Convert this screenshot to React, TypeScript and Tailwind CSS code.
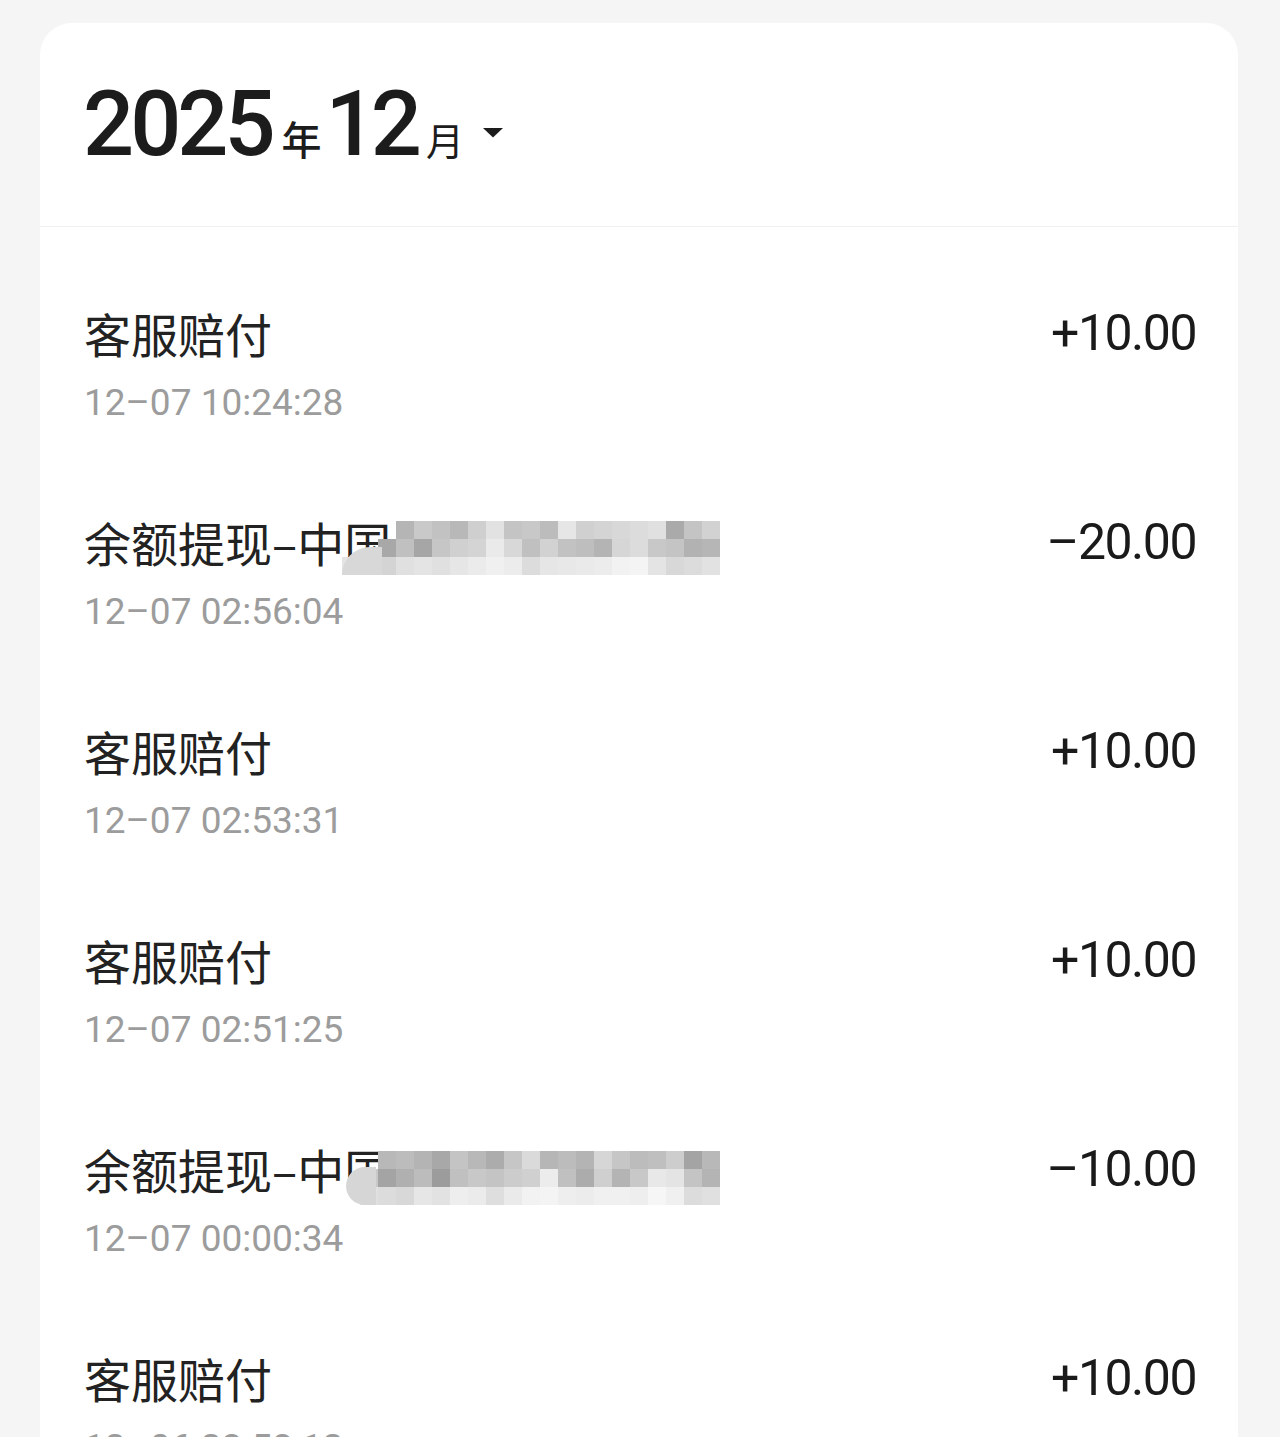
const rows = [
  { title: "客服赔付", time: "12–07 10:24:28", amount: "+10.00" },
  { title: "余额提现–中国", time: "12–07 02:56:04", amount: "–20.00", mosaic: 1 },
  { title: "客服赔付", time: "12–07 02:53:31", amount: "+10.00" },
  { title: "客服赔付", time: "12–07 02:51:25", amount: "+10.00" },
  { title: "余额提现–中国", time: "12–07 00:00:34", amount: "–10.00", mosaic: 2 },
  { title: "客服赔付", time: "12–06 23:58:12", amount: "+10.00" },
];

const T = "transparent";

const mosaicA = [
  [T, T, T, "#b5b5b5", "#c9c9c9", "#c2c2c2", "#b8b8b8", "#cfcfcf", "#e2e2e2", "#c4c4c4", "#c8c8c8", "#bcbcbc", "#e6e6e6", "#d0d0d0", "#d4d4d4", "#d8d8d8", "#dcdcdc", "#e0e0e0", "#aaaaaa", "#c4c4c4", "#d2d2d2"],
  [T, T, "#a8a8a8", "#c0c0c0", "#a6a6a6", "#c6c6c6", "#d0d0d0", "#d4d4d4", "#eaeaea", "#d8d8d8", "#c0c0c0", "#d2d2d2", "#c2c2c2", "#bebebe", "#b4b4b4", "#d6d6d6", "#dcdcdc", "#c8c8c8", "#c4c4c4", "#b2b2b2", "#b6b6b6"],
  ["#e4e4e4", "#d8d8d8", "#d4d4d4", "#e0e0e0", "#e4e4e4", "#e0e0e0", "#e6e6e6", "#ebebeb", "#f0f0f0", "#ececec", "#dcdcdc", "#e6e6e6", "#e8e8e8", "#eaeaea", "#ececec", "#f2f2f2", "#f4f4f4", "#e4e4e4", "#d8d8d8", "#dcdcdc", "#e2e2e2"],
];

const mosaicB = [
  [T, "#b8b8b8", "#bcbcbc", "#b4b4b4", "#a8a8a8", "#c4c4c4", "#b8b8b8", "#acacac", "#c6c6c6", "#dadada", "#b6b6b6", "#bcbcbc", "#b4b4b4", "#d6d6d6", "#c6c6c6", "#bcbcbc", "#bfbfbf", "#cdcdcd", "#a4a4a4", "#b8b8b8"],
  ["#c8c8c8", "#a4a4a4", "#b0b0b0", "#bcbcbc", "#9c9c9c", "#c0c0c0", "#c8c8c8", "#c4c4c4", "#cccccc", "#d0d0d0", "#ececec", "#c0c0c0", "#acacac", "#cfcfcf", "#b4b4b4", "#c8c8c8", "#e8e8e8", "#e4e4e4", "#c4c4c4", "#b4b4b4"],
  ["#e0e0e0", "#dcdcdc", "#d8d8d8", "#e6e6e6", "#e2e2e2", "#eeeeee", "#ebebeb", "#dedede", "#eaeaea", "#f2f2f2", "#f4f4f4", "#eeeeee", "#ececec", "#f0f0f0", "#f0f0f0", "#eeeeee", "#f6f6f6", "#f0f0f0", "#dcdcdc", "#e0e0e0"],
];

function Mosaic({ kind }: { kind: number }) {
  const grid = kind === 1 ? mosaicA : mosaicB;
  return (
    <div
      className={
        kind === 1
          ? "pointer-events-none absolute left-[258px] top-[7px] flex flex-col"
          : "pointer-events-none absolute left-[276px] top-[10px] flex flex-col"
      }
    >
      {grid.map((line, r) => (
        <div key={r} className="flex">
          {line.map((c, i) => (
            <div key={i} className="h-[18px] w-[18px]" style={{ backgroundColor: c }} />
          ))}
        </div>
      ))}
      <div
        className={
          kind === 1
            ? "absolute left-[0px] top-[26px] h-[28px] w-[40px] rounded-tl-[36px] bg-[#d8d8d8]"
            : "absolute left-[-14px] top-[16px] h-[38px] w-[30px] rounded-l-[19px] bg-[#d6d6d6]"
        }
      />
    </div>
  );
}

export default function App() {
  return (
    <div className="min-h-[1437px] overflow-hidden bg-[#f5f5f5] pt-[23px] pl-[40px] pr-[42px] font-['Roboto','Noto_Sans_CJK_SC',sans-serif]">
      <div className="h-[1460px] w-[1198px] rounded-t-[32px] bg-white">
        <div className="flex h-[204px] items-baseline border-b border-[#f1f1f1] pl-[43px] pt-[52px] text-[#1c1c1c]">
          <span className="text-[90px] font-medium leading-[100px] tracking-[-4px]">2025</span>
          <span className="ml-[10px] font-['Noto_Sans_CJK_SC',sans-serif] text-[40px] font-medium leading-none">年</span>
          <span className="ml-[4px] text-[90px] font-medium leading-[100px] tracking-[-6px]">12</span>
          <span className="ml-[10px] font-['Noto_Sans_CJK_SC',sans-serif] text-[38px] leading-none">月</span>
          <svg className="ml-[18px] mt-[52px] self-start" width="22" height="11" viewBox="0 0 22 11">
            <path d="M1 1 L21 1 L11 10.5 Z" fill="#1c1c1c" />
          </svg>
        </div>
        {rows.map((row, i) => (
          <div key={i} className="flex h-[209px] items-start justify-between pl-[44px] pr-[42px] pt-[78px]">
            <div className="relative flex flex-col">
              <span className="font-['Noto_Sans_CJK_SC',sans-serif] text-[47px] leading-[56px] text-[#222222]">
                {row.title}
              </span>
              <span className="mt-[20px] text-[37px] leading-[44px] text-[#9c9c9c]">{row.time}</span>
              {row.mosaic ? <Mosaic kind={row.mosaic} /> : null}
            </div>
            <span className="text-[50px] leading-[56px] tracking-[-1.5px] text-[#1a1a1a]">{row.amount}</span>
          </div>
        ))}
      </div>
    </div>
  );
}
